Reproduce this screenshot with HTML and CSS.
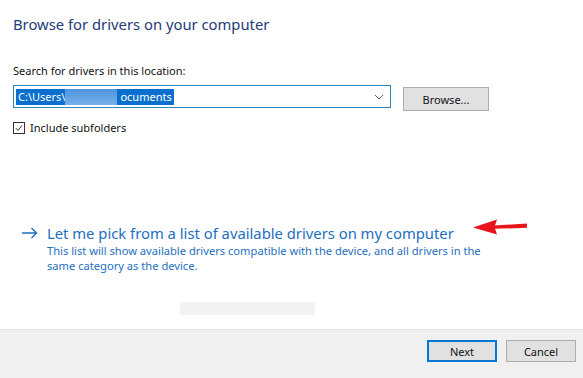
FILE: index.html
```html
<!DOCTYPE html>
<html>
<head>
<meta charset="utf-8">
<link rel="stylesheet" href="styles.css">
</head>
<body>
<div class="page">
  <div class="main">
    <h1 class="title">Browse for drivers on your computer</h1>
    <div class="label">Search for drivers in this location:</div>
    <div class="path-row">
      <div class="combo">
        <span class="sel">C:\Users\<span class="redact"></span>ocuments</span>
        <svg class="chev" width="10" height="6" viewBox="0 0 10 6"><path d="M1 1 L5 5 L9 1" fill="none" stroke="#606060" stroke-width="1"/></svg>
      </div>
      <div class="btn browse">Browse...</div>
    </div>
    <div class="check-row">
      <span class="box"><svg width="12" height="12" viewBox="0 0 12 12"><path d="M2.2 6.2 L4.8 8.8 L9.8 2.8" fill="none" stroke="#222" stroke-width="1.1"/></svg></span>
      <span>Include subfolders</span>
    </div>
    <div class="pick">
      <div class="pick-head">
        <svg class="arrow" width="17" height="12" viewBox="0 0 17 12"><path d="M1 6 H15.5 M10.5 1 L15.5 6 L10.5 11" fill="none" stroke="#1e6fc0" stroke-width="1.4"/></svg>
        <span class="pick-title">Let me pick from a list of available drivers on my computer</span>
      </div>
      <div class="pick-desc">This list will show available drivers compatible with the device, and all drivers in the<br>same category as the device.</div>
    </div>
    <div class="ghost"></div>
  </div>
  <div class="footer">
    <div class="btn next">Next</div>
    <div class="btn">Cancel</div>
  </div>
  <svg class="red-arrow" width="56" height="18" viewBox="0 0 56 18"><path d="M21 7.4 L54 5.6 L54 9.8 L21 10.8 Z" fill="#e8141a"/><path d="M0 9.5 L24 1.5 L21.5 9 L24 16.5 Z" fill="#e8141a"/></svg>
</div>
</body>
</html>
```
FILE: styles.css
```css
html, body {
  margin: 0;
  padding: 0;
  background: #ffffff;
}
.page {
  position: relative;
  width: 583px;
  height: 378px;
  display: flex;
  flex-direction: column;
  font-family: "Noto Sans", "Open Sans", sans-serif;
  font-size: 11px;
  color: #111;
  overflow: hidden;
}
.main {
  flex: 1;
  padding: 14px 13px 0 13px;
}
.title {
  margin: 0;
  font-size: 14.8px;
  font-weight: normal;
  line-height: 20px;
  color: #1f3b78;
}
.label {
  margin-top: 29px;
  line-height: 16px;
}
.path-row {
  display: flex;
  align-items: flex-start;
  margin-top: 6px;
}
.combo {
  box-sizing: border-box;
  width: 378px;
  height: 23px;
  border: 1px solid #2a86b4;
  display: flex;
  align-items: center;
  justify-content: space-between;
  padding: 0 6px 0 2px;
}
.sel {
  background: #0a6fce;
  color: #fff;
  line-height: 16px;
  padding: 0 2px;
  display: flex;
  align-items: center;
}
.redact {
  display: inline-block;
  width: 52px;
  height: 16px;
  margin-right: 3px;
  background: linear-gradient(180deg, #4d94de 0%, #79b0ea 100%);
}
.chev {
  display: block;
}
.btn {
  box-sizing: border-box;
  width: 70px;
  height: 22px;
  background: #e1e1e1;
  border: 1px solid #adadad;
  display: flex;
  align-items: center;
  justify-content: center;
  color: #111;
}
.browse {
  width: 86px;
  height: 24px;
  margin: 2px 0 0 12px;
}
.check-row {
  display: flex;
  align-items: center;
  gap: 5px;
  margin-top: 10px;
  line-height: 14px;
}
.box {
  box-sizing: border-box;
  width: 12px;
  height: 12px;
  border: 1px solid #333;
  display: flex;
  align-items: center;
  justify-content: center;
}
.box svg {
  display: block;
}
.pick {
  margin-top: 88px;
  color: #1e6fc0;
}
.pick-head {
  display: flex;
  align-items: center;
}
.arrow {
  display: block;
  margin: 0 9px 0 8px;
}
.pick-title {
  font-size: 14.8px;
  line-height: 20px;
}
.pick-desc {
  padding-left: 34px;
  font-size: 11.15px;
  line-height: 15px;
}
.ghost {
  width: 135px;
  height: 13px;
  margin: 29px 0 0 167px;
  background: #f3f3f3;
}
.footer {
  height: 38px;
  background: #f0f0f0;
  border-top: 1px solid #e4e4e4;
  display: flex;
  justify-content: flex-end;
  align-items: flex-start;
  gap: 9px;
  padding: 10px 7px 0 0;
  box-sizing: content-box;
}
.next {
  border: 1px solid #0078d7;
  box-shadow: inset 0 0 0 1px #0078d7;
}
.red-arrow {
  position: absolute;
  left: 473px;
  top: 218px;
}
```
